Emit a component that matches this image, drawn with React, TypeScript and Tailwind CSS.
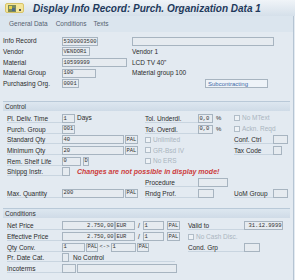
import React from "react";

const sans = { fontFamily: '"Liberation Sans", Arial, sans-serif' };

function Box({ w, children, right, blue, className = "" }: { w: number; children?: React.ReactNode; right?: boolean; blue?: boolean; className?: string }) {
  return (
    <div
      className={`h-[9px] shrink-0 border border-[#a7b4c0] ${blue ? "bg-[#eef3f8] text-[#3f6aa8] text-[6px] pl-[2px]" : "bg-[#e6ebf0] text-[#333] text-[5.5px] px-[0.5px]"} flex items-center overflow-hidden leading-none whitespace-nowrap ${right ? "justify-end" : ""} ${className}`}
      style={{ width: w, fontFamily: blue ? '"Liberation Sans", sans-serif' : '"Liberation Mono", monospace' }}
    >
      {children}
    </div>
  );
}

function Label({ w, children }: { w: number; children: React.ReactNode }) {
  return (
    <div className="shrink-0 h-[9px] border-b border-[#c9d5e0] text-[6.5px] leading-[9px] text-[#2b2b2b] whitespace-nowrap" style={{ width: w }}>
      {children}
    </div>
  );
}

function Check({ children }: { children: React.ReactNode }) {
  return (
    <div className="flex items-center gap-[2px] text-[6.5px] text-[#aab5c0] whitespace-nowrap">
      <span className="w-[6px] h-[6px] border border-[#b1bdc8] bg-[#eef2f6]" />
      {children}
    </div>
  );
}

function Row({ h = 10.7, children }: { h?: number; children: React.ReactNode }) {
  return (
    <div className="flex items-center" style={{ height: h }}>
      {children}
    </div>
  );
}

function Col({ w, children }: { w: number; children?: React.ReactNode }) {
  return (
    <div className="shrink-0 flex items-center" style={{ width: w }}>
      {children}
    </div>
  );
}

function Band({ title }: { title: string }) {
  return (
    <div className="h-[10px] mx-[3px] border-t border-[#b9c9d8] bg-gradient-to-b from-[#dde7f0] to-[#cfdbe7] text-[6.5px] leading-[9px] pl-[2px] text-[#333]">
      {title}
    </div>
  );
}

export default function App() {
  return (
    <div className="w-[295px] h-[280px] overflow-hidden bg-[#e3eaf1]" style={sans}>
      {/* title bar */}
      <div className="h-[16px] flex items-center bg-gradient-to-b from-[#f0f4f8] to-[#d5e0ea]">
        <div className="ml-[5px] w-[19px] h-[10px] rounded-[2px] bg-[#f4e59a] border border-[#d8c46a] flex items-center pl-[2px] gap-[3px]">
          <svg width="8" height="7" viewBox="0 0 8 7">
            <rect x="0" y="0" width="8" height="7" fill="#7b8a5a" />
            <rect x="1" y="1" width="3" height="3" fill="#e8d24a" />
            <rect x="4" y="3" width="3" height="3" fill="#4d6a8c" />
          </svg>
          <span className="w-[2px] h-[2px] mt-[4px] bg-[#555]" />
        </div>
        <div className="ml-[9px] text-[10px] font-bold italic text-[#1f3a5c] whitespace-nowrap">
          Display Info Record: Purch. Organization Data 1
        </div>
      </div>

      <div className="border-r border-[#b5c4d3] w-[294px] h-[264px]">
        {/* tabs */}
        <div className="h-[16px] flex items-center bg-[#dbe5ee] text-[6.5px] text-[#54616e]">
          <span className="ml-[9px]">General Data</span>
          <span className="ml-[8px]">Conditions</span>
          <span className="ml-[7px]">Texts</span>
        </div>

        {/* header */}
        <div className="pl-[3px] pt-[4px]">
          <Row h={10.6}>
            <Col w={59}><span className="text-[6.5px] text-[#2b2b2b]">Info Record</span></Col>
            <Col w={70}><Box w={36}>5300003500</Box></Col>
            <Box w={142} />
          </Row>
          <Row h={10.6}>
            <Col w={59}><span className="text-[6.5px] text-[#2b2b2b]">Vendor</span></Col>
            <Col w={70}><Box w={28}>VENDOR1</Box></Col>
            <span className="text-[6.5px] text-[#2b2b2b]">Vendor 1</span>
          </Row>
          <Row h={10.6}>
            <Col w={59}><span className="text-[6.5px] text-[#2b2b2b]">Material</span></Col>
            <Col w={70}><Box w={65}>10599999</Box></Col>
            <span className="text-[6.5px] text-[#2b2b2b]">LCD TV 40"</span>
          </Row>
          <Row h={10.6}>
            <Col w={59}><span className="text-[6.5px] text-[#2b2b2b]">Material Group</span></Col>
            <Col w={70}><Box w={34}>100</Box></Col>
            <span className="text-[6.5px] text-[#2b2b2b]">Material group 100</span>
          </Row>
          <Row h={10.6}>
            <Col w={59}><span className="text-[6.5px] text-[#2b2b2b]">Purchasing Org.</span></Col>
            <Col w={143}><Box w={17}>0001</Box></Col>
            <Box w={63} blue>Subcontracting</Box>
          </Row>
        </div>

        {/* control */}
        <div className="mt-[12px]">
          <Band title="Control" />
          <div className="pl-[7px] pt-[2px]">
            <Row>
              <Label w={55}>Pl. Deliv. Time</Label>
              <Col w={83}><Box w={13}>1</Box><span className="ml-[2px] text-[6.5px] text-[#2b2b2b]">Days</span></Col>
              <Col w={89}><Label w={53}>Tol. Underdl.</Label><Box w={15}>0,0</Box><span className="ml-[3px] text-[6px] text-[#333]">%</span></Col>
              <Check>No MText</Check>
            </Row>
            <Row>
              <Label w={55}>Purch. Group</Label>
              <Col w={83}><Box w={13}>001</Box></Col>
              <Col w={89}><Label w={53}>Tol. Overdl.</Label><Box w={15}>0,0</Box><span className="ml-[3px] text-[6px] text-[#333]">%</span></Col>
              <Check>Ackn. Reqd</Check>
            </Row>
            <Row>
              <Label w={55}>Standard Qty</Label>
              <Col w={83}><Box w={62}>40</Box><Box w={13} className="ml-[1px]">PAL</Box></Col>
              <Col w={89}><Check>Unlimited</Check></Col>
              <Label w={39}>Conf. Ctrl</Label><Box w={15} />
            </Row>
            <Row>
              <Label w={55}>Minimum Qty</Label>
              <Col w={83}><Box w={62}>20</Box><Box w={13} className="ml-[1px]">PAL</Box></Col>
              <Col w={89}><Check>GR-Bsd IV</Check></Col>
              <Label w={39}>Tax Code</Label><Box w={9} />
            </Row>
            <Row>
              <Label w={55}>Rem. Shelf Life</Label>
              <Col w={83}><Box w={19}>0</Box><Box w={6} className="ml-[2px]">D</Box></Col>
              <Col w={89}><Check>No ERS</Check></Col>
            </Row>
            <Row>
              <Label w={55}>Shippg Instr.</Label>
              <Box w={8} />
              <span className="ml-[7px] text-[7px] font-bold italic text-[#cc3b3b] whitespace-nowrap">Changes are not possible in display mode!</span>
            </Row>
            <Row>
              <Col w={138} />
              <Col w={89}><Label w={53}>Procedure</Label><Box w={30} /></Col>
            </Row>
            <Row>
              <Label w={55}>Max. Quantity</Label>
              <Col w={83}><Box w={62}>200</Box><Box w={13} className="ml-[1px]">PAL</Box></Col>
              <Col w={89}><Label w={53}>Rndg Prof.</Label><Box w={16} /></Col>
              <Label w={39}>UoM Group</Label><Box w={15} />
            </Row>
          </div>
        </div>

        {/* conditions */}
        <div className="mt-[10px]">
          <Band title="Conditions" />
          <div className="pl-[7px] pt-[2px]">
            <Row>
              <Label w={55}>Net Price</Label>
              <Box w={53} right>2.750,00</Box>
              <Box w={20}>EUR</Box>
              <span className="w-[8px] text-center text-[6.5px] text-[#333]">/</span>
              <Box w={21}>1</Box>
              <Box w={13} className="ml-[3px]">PAL</Box>
              <Col w={8} />
              <Label w={56}>Valid to</Label>
              <Box w={39} right>31.12.9999</Box>
            </Row>
            <Row>
              <Label w={55}>Effective Price</Label>
              <Box w={53} right>2.750,00</Box>
              <Box w={20}>EUR</Box>
              <span className="w-[8px] text-center text-[6.5px] text-[#333]">/</span>
              <Box w={21}>1</Box>
              <Box w={13} className="ml-[3px]">PAL</Box>
              <Col w={8} />
              <Check>No Cash Disc.</Check>
            </Row>
            <Row>
              <Label w={55}>Qty Conv.</Label>
              <Box w={23}>1</Box>
              <Box w={12} className="ml-[1px]">PAL</Box>
              <span className="w-[13px] text-center text-[5.5px] text-[#333]" style={{ fontFamily: '"Liberation Mono", monospace' }}>&lt;-&gt;</span>
              <Box w={25}>1</Box>
              <Box w={12} className="ml-[1px]">PAL</Box>
              <Col w={39} />
              <Label w={56}>Cond. Grp</Label>
              <Box w={16} />
            </Row>
            <Row>
              <Label w={55}>Pr. Date Cat.</Label>
              <Box w={7} />
              <div className="h-[9px] w-[106px] border-b border-[#c9d5e0] pl-[4px] text-[6.5px] leading-[9px] text-[#2b2b2b]">No Control</div>
            </Row>
            <Row>
              <Label w={55}>Incoterms</Label>
              <Box w={14} />
              <Box w={100} className="ml-[1px]" />
            </Row>
          </div>
        </div>
      </div>
    </div>
  );
}
